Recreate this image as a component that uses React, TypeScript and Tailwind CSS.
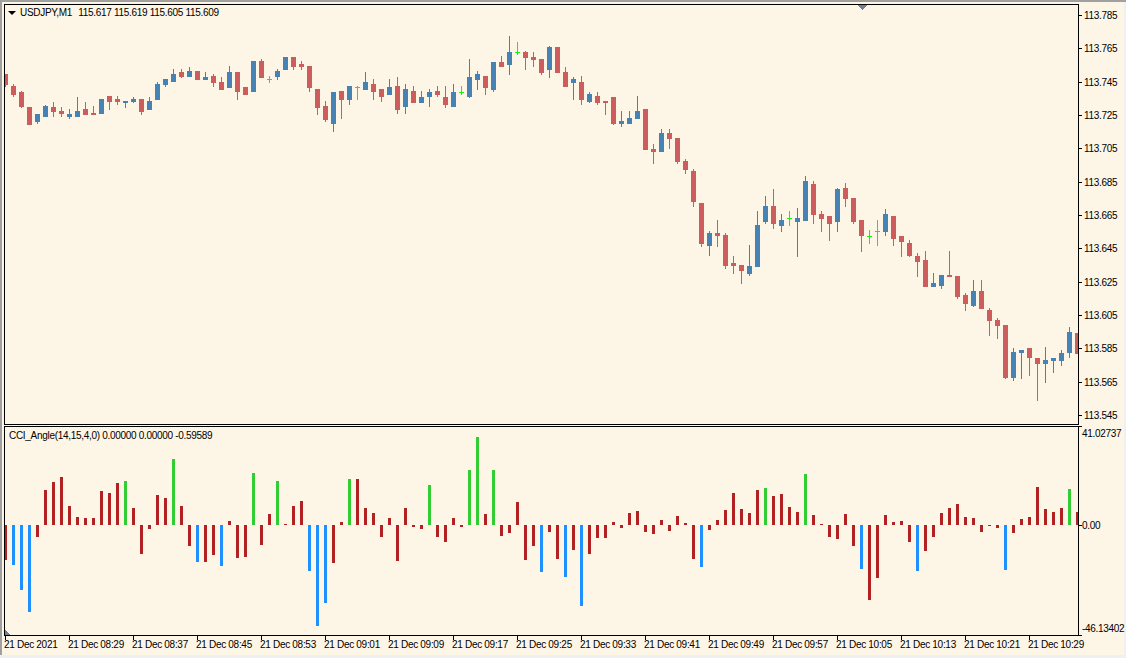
const FONT = "font-['Liberation_Sans',Arial,sans-serif]";

type C = [string, number, number, number, number];
const candles: C[] = [
["r",74,85,74,87],["r",86,95,84,97],["r",92,107,91,108],["r",107,125,107,125],["b",114,122,114,124],
["b",106,117,105,117],["r",107,112,102,117],["r",111,114,107,117],["b",114,117,109,119],["b",111,117,97,117],
["r",109,115,102,115],["r",113,115,106,115],["b",99,114,99,114],["r",96,102,96,110],["r",99,102,96,105],
["b",101,103,101,108],["b",99,102,97,103],["r",99,112,99,115],["b",101,110,97,110],["b",84,100,82,100],
["b",79,85,79,87],["b",74,82,69,82],["r",72,77,69,78],["b",71,77,67,77],["r",71,80,71,80],
["b",77,80,72,80],["r",76,83,74,87],["r",82,90,77,90],["b",72,88,66,88],["r",72,92,72,100],
["r",87,95,87,95],["b",61,92,61,92],["r",61,78,59,78],["g",79,79,76,83],["b",71,77,69,80],
["b",57,70,57,70],["r",57,67,57,70],["r",64,67,61,70],["r",66,88,66,92],["r",89,108,89,115],
["r",106,120,101,122],["b",92,124,92,132],["r",91,100,91,119],["b",86,100,86,105],["g",87,87,86,100],
["b",82,90,72,90],["r",84,92,79,100],["r",89,97,89,102],["b",87,95,79,95],["r",86,110,77,114],
["b",89,107,84,114],["r",91,103,86,103],["b",97,103,91,103],["b",92,97,89,107],["r",91,95,86,97],
["r",97,105,86,108],["b",92,107,84,107],["g",92,92,86,95],["b",77,97,59,98],["b",74,80,71,90],
["r",76,88,76,95],["b",62,90,62,92],["r",62,67,56,67],["b",52,65,36,75],["g",52,52,42,55],
["r",52,58,51,70],["r",57,60,52,67],["r",59,73,59,75],["b",47,70,46,78],["r",47,73,47,73],
["r",72,87,67,87],["b",79,83,77,100],["r",82,100,76,105],["b",94,102,92,103],["r",96,103,92,105],
["r",101,103,101,115],["r",97,124,97,125],["b",121,124,111,127],["b",118,124,111,124],["b",111,119,96,119],
["r",109,150,109,150],["r",149,152,144,164],["b",133,152,129,152],["r",133,139,129,149],["r",138,162,138,164],
["r",161,170,159,174],["r",171,202,169,207],["r",203,244,203,247],["b",233,246,231,256],["r",233,236,220,247],
["r",235,266,233,269],["r",263,266,256,274],["r",265,271,265,284],["b",266,274,245,276],["b",225,267,211,267],
["b",206,222,196,224],["r",206,224,189,229],["b",220,226,214,232],["g",218,218,211,226],["b",218,222,208,257],
["b",181,221,176,221],["r",184,215,181,224],["r",214,219,211,232],["r",216,224,216,241],["b",189,222,188,232],
["r",188,199,183,207],["r",198,222,198,224],["r",220,236,220,252],["g",236,236,230,244],["g",231,231,220,246],
["b",214,232,209,236],["r",216,239,216,246],["r",236,242,236,257],["r",243,256,240,257],["r",256,262,253,277],
["r",260,287,251,287],["b",283,287,273,287],["b",275,286,275,289],["r",275,277,251,277],["r",276,297,276,299],
["r",295,304,293,311],["b",291,306,280,307],["r",291,309,280,309],["r",310,321,308,336],["r",320,326,318,339],
["r",325,378,325,379],["b",352,378,348,381],["b",350,353,350,379],["r",348,358,348,376],["r",358,364,358,401],
["b",360,364,347,383],["b",358,361,358,373],["b",353,361,350,366],["b",332,353,327,358],["r",333,354,333,354],
];

const cFill: Record<string, string> = { r: "#cd5c5c", b: "#4682b4", g: "#00ff00" };
const hFill: Record<string, string> = { r: "#b22222", b: "#1e90ff", g: "#32cd32" };

const hist: [string, number][] = [
["r",-35],["b",-40],["b",-65],["b",-87],["r",-12],["r",35],["r",43],["r",48],["r",19],["r",8],
["r",7],["r",7],["r",34],["r",32],["r",42],["g",44],["r",17],["r",-29],["r",-4],["r",30],
["r",27],["g",66],["r",19],["r",-21],["b",-37],["r",-37],["r",-30],["b",-41],["r",4],["r",-33],
["r",-32],["g",52],["r",-20],["r",11],["g",44],["r",1],["r",19],["r",24],["b",-46],["b",-101],
["b",-78],["r",-38],["r",3],["g",46],["r",46],["r",17],["r",12],["r",-12],["r",7],["r",-36],
["r",17],["r",-2],["r",-4],["g",40],["r",-12],["r",-17],["r",7],["r",-2],["g",55],["g",88],
["r",11],["g",55],["r",-11],["r",-8],["r",23],["r",-35],["r",-21],["b",-47],["r",-7],["r",-34],
["b",-52],["r",-25],["b",-81],["r",-29],["r",-13],["r",-13],["r",3],["r",-3],["r",12],["r",14],
["r",-7],["r",-9],["r",5],["r",-6],["r",9],["r",2],["r",-34],["b",-42],["r",-5],["r",5],
["r",15],["r",32],["r",16],["r",12],["r",35],["g",37],["r",29],["r",31],["r",18],["r",13],
["g",51],["r",10],["r",1],["r",-12],["r",-14],["r",11],["r",-21],["b",-44],["r",-75],["r",-53],
["r",10],["r",3],["r",4],["r",-17],["b",-46],["r",-26],["r",-12],["r",12],["r",17],["r",21],
["r",8],["r",7],["r",-7],["r",-1],["r",-3],["b",-45],["r",-8],["r",6],["r",8],["r",38],
["r",16],["r",13],["r",17],["g",36],["r",13],
];

const prices = ["113.785","113.765","113.745","113.725","113.705","113.685","113.665","113.645","113.625","113.605","113.585","113.565","113.545"];
const times = ["21 Dec 2021","21 Dec 08:29","21 Dec 08:37","21 Dec 08:45","21 Dec 08:53","21 Dec 09:01","21 Dec 09:09","21 Dec 09:17","21 Dec 09:25","21 Dec 09:33","21 Dec 09:41","21 Dec 09:49","21 Dec 09:57","21 Dec 10:05","21 Dec 10:13","21 Dec 10:21","21 Dec 10:29"];

function PriceChart() {
  return (
    <svg viewBox="5 5 1073 419" width={1073} height={419} shapeRendering="crispEdges" className="block">
      {candles.map(([k, t, b, wt, wb], i) => {
        const x = 5 + 8 * i;
        const f = cFill[k];
        return (
          <g key={i} fill={f}>
            <rect x={x} y={wt} width={1} height={wb - wt} />
            {k === "g" ? <rect x={x - 2} y={t} width={5} height={1} /> : <rect x={x - 2} y={t} width={5} height={b - t} />}
          </g>
        );
      })}
      <polygon points="857,5 867,5 862,10" fill="#6d8296" />
    </svg>
  );
}

function IndicatorChart() {
  return (
    <svg viewBox="5 427 1073 208" width={1073} height={208} shapeRendering="crispEdges" className="block">
      {hist.map(([k, v], i) => (
        <rect key={i} x={4 + 8 * i} y={v > 0 ? 525 - v : 525} width={3} height={Math.abs(v)} fill={hFill[k]} />
      ))}
      <polygon points="5,630 5,635 10,635" fill="#6d8296" />
    </svg>
  );
}

export default function App() {
  return (
    <div className={`${FONT} w-[1126px] h-[658px] overflow-hidden bg-[#f0f0f0] text-[10px] tracking-[-0.3px] leading-[10px] text-black`}>
      <div className="h-[2px] bg-[#a0a0a0]" />
      <div className="w-[1124px] h-[653px] flex flex-col bg-[#fdf5e6] border-l-2 border-[#a0a0a0] pl-[2px] pt-[2px]">
        <div className="flex">
          <div className="flex flex-col">
            <div className="relative w-[1075px] h-[421px] border border-black">
              <PriceChart />
              <div className="absolute left-[3px] top-[3px] flex items-center gap-[4px]">
                <span className="w-0 h-0 border-x-[4px] border-x-transparent border-t-[4px] border-t-black" />
                <span>USDJPY,M1</span>
                <span className="ml-[2px]">115.617 115.619 115.605 115.609</span>
              </div>
            </div>
            <div className="relative mt-[1px] w-[1075px] h-[210px] border border-black">
              <IndicatorChart />
              <div className="absolute left-[4px] top-[4px]">CCI_Angle(14,15,4,0) 0.00000 0.00000 -0.59589</div>
            </div>
          </div>
          <div className="flex flex-col">
            <div className="h-[422px] pt-[7px]">
              {prices.map((p) => (
                <div key={p} className="h-[33.33px] flex items-start">
                  <span className="w-[3px] h-px mt-[4px] bg-black" />
                  <span className="ml-[2px]">{p}</span>
                </div>
              ))}
            </div>
            <div className="pt-[3px] flex flex-col">
              <div className="flex items-start">
                <span className="w-[3px] h-px -mt-[3px] bg-black" />
                <span>41.02737</span>
              </div>
              <div className="mt-[82px] flex items-start">
                <span className="w-[3px] h-px mt-[4px] bg-black" />
                <span>0.00</span>
              </div>
              <div className="mt-[93px] flex items-start">
                <span className="w-[3px] h-px mt-[11px] bg-black" />
                <span>-46.13402</span>
              </div>
            </div>
          </div>
        </div>
        <div className="flex pl-[1px]">
          {times.map((t) => (
            <div key={t} className="w-[64px] shrink-0">
              <div className="w-px h-[4px] bg-black" />
              <div className="-ml-[1px] whitespace-nowrap">{t}</div>
            </div>
          ))}
        </div>
      </div>
    </div>
  );
}
